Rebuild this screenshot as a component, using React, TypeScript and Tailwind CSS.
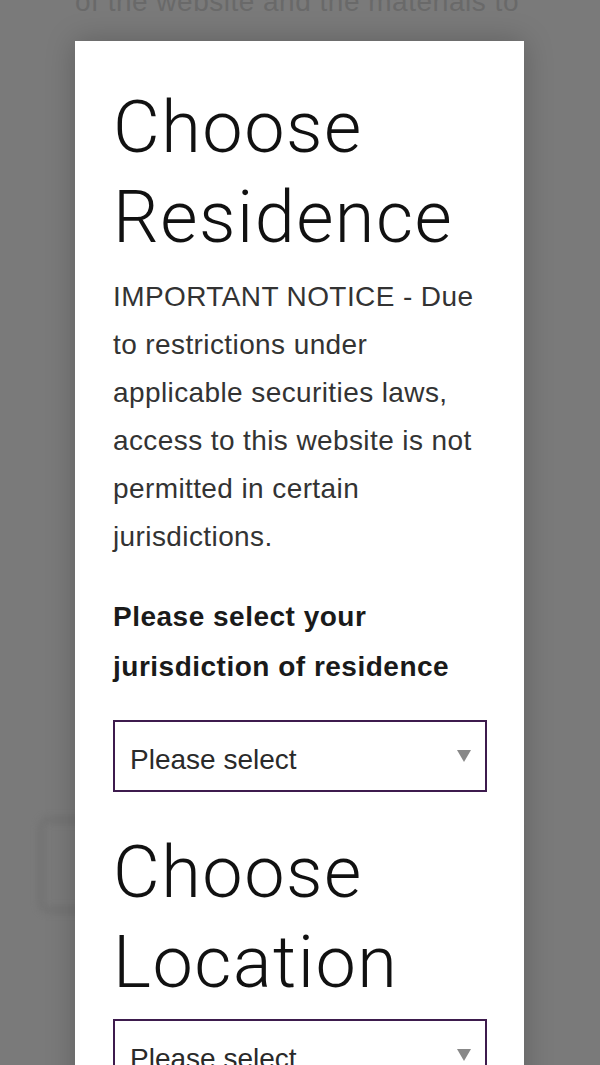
import React from "react";

function SelectBox() {
  return (
    <div className="flex h-[72px] w-full items-center justify-between border-2 border-[#3d1b4d] bg-white pl-[15px] pr-[14px]">
      <span className="pt-[8px] text-[28px] leading-[32px] text-[#2a2a2a]">Please select</span>
      <svg width="14" height="12" viewBox="0 0 14 12" className="block">
        <polygon points="0,0 14,0 7,12" fill="#888888" />
      </svg>
    </div>
  );
}

export default function App() {
  const sans = { fontFamily: '"Liberation Sans", Arial, Helvetica, sans-serif' };
  const light = { fontFamily: 'Roboto, "Liberation Sans", Arial, sans-serif' };
  return (
    <div className="relative h-[1065px] w-[600px] overflow-hidden bg-[#7a7a7a]" style={sans}>
      {/* page behind the overlay */}
      <div className="-mt-[22px] px-[75px]">
        <p className="whitespace-nowrap text-[28px] leading-[48px] tracking-[0.5px] text-[#696969]">
          of the website and the materials to
        </p>
        <div className="ml-[-37px] mt-[791px] h-[96px] w-[480px] rounded-[10px] border-[6px] border-[#727272] blur-[3px]" />
      </div>

      {/* modal */}
      <div className="absolute left-[75px] top-[41px] h-[1100px] w-[449px] bg-white pl-[38px] pr-[37px] pt-[42px] shadow-[0_0_28px_rgba(0,0,0,0.22)]">
        <h2 className="text-[72px] font-light leading-[90px] tracking-[1.5px] text-[#111]" style={light}>
          Choose Residence
        </h2>
        <p className="mt-[10px] text-[28px] leading-[48px] tracking-[0.4px] text-[#333]">
          IMPORTANT NOTICE - Due to restrictions under applicable securities laws, access to this website is not permitted in certain jurisdictions.
        </p>
        <p className="mt-[31px] text-[28px] font-bold leading-[50px] tracking-[0.5px] text-[#1a1a1a]">
          Please select your jurisdiction of residence
        </p>
        <div className="mt-[28px]">
          <SelectBox />
        </div>
        <h2 className="mt-[36px] text-[72px] font-light leading-[90px] tracking-[1.5px] text-[#111]" style={light}>
          Choose Location
        </h2>
        <div className="mt-[11px]">
          <SelectBox />
        </div>
      </div>
    </div>
  );
}
